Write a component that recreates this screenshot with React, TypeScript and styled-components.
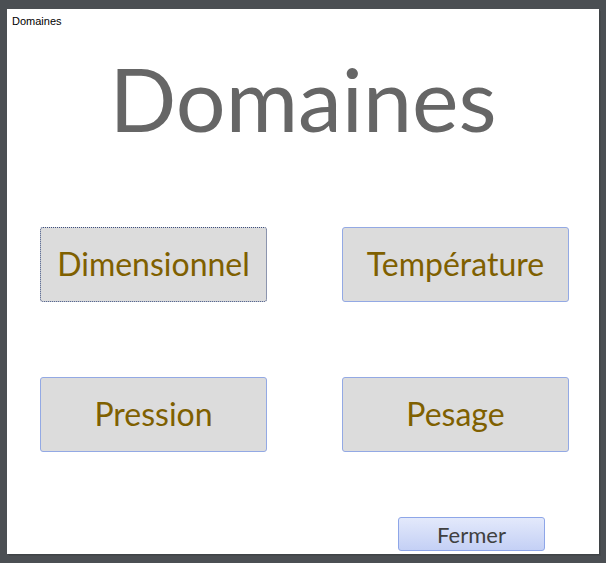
import React from 'react';
import styled, { createGlobalStyle } from 'styled-components';

const GlobalStyle = createGlobalStyle`
  html, body {
    margin: 0;
    padding: 0;
    background: #4b4f53;
  }
  body {
    width: 606px;
    height: 563px;
    overflow: hidden;
    font-family: 'Lato', 'Open Sans', sans-serif;
  }
`;

const Frame = styled.div`
  width: 606px;
  height: 563px;
  box-sizing: border-box;
  padding: 9px 7px 9px 7px;
  background: #4b4f53;
`;

const Window = styled.div`
  width: 592px;
  height: 545px;
  background: #ffffff;
  display: flex;
  flex-direction: column;
  box-shadow: 1px 1px 0 #3f4346, 2px 2px 0 #45494c;
`;

const TitleBar = styled.div`
  height: 22px;
  padding: 5px 0 0 5px;
  box-sizing: border-box;
  font-family: 'Liberation Sans', Arial, sans-serif;
  font-size: 11px;
  color: #000000;
  line-height: 14px;
`;

const Heading = styled.h1`
  margin: 17px 0 0 0;
  height: 100px;
  text-align: center;
  font-family: 'Lato', 'Open Sans', sans-serif;
  font-weight: 400;
  font-size: 88px;
  line-height: 100px;
  color: #666666;
`;

const ButtonGrid = styled.div`
  display: grid;
  grid-template-columns: 227px 227px;
  grid-auto-rows: 75px;
  column-gap: 75px;
  row-gap: 75px;
  margin-top: 79px;
  padding-left: 33px;
`;

const DomainButton = styled.button<{ $focused?: boolean }>`
  box-sizing: border-box;
  width: 227px;
  height: 75px;
  background: #dcdcdc;
  border: 1px ${(p) => (p.$focused ? 'dotted #3d4f80' : 'solid #93a9e4')};
  border-radius: 3px;
  font-family: 'Lato', 'Open Sans', sans-serif;
  font-size: 32px;
  color: #7f6000;
  padding: 0 0 3px 0;
  cursor: pointer;
`;

const Footer = styled.div`
  display: flex;
  margin-top: 65px;
  padding-left: 391px;
`;

const CloseButton = styled.button`
  box-sizing: border-box;
  width: 147px;
  height: 34px;
  border: 1px solid #8ea6e8;
  border-radius: 3px;
  background: linear-gradient(#e3e9fb, #c4d0f5);
  font-family: 'Lato', 'Open Sans', sans-serif;
  font-size: 22px;
  color: #404040;
  padding: 0;
  cursor: pointer;
`;

const domaines = ['Dimensionnel', 'Température', 'Pression', 'Pesage'];

const App: React.FC = () => {
  return (
    <>
      <GlobalStyle />
      <Frame>
        <Window>
          <TitleBar>Domaines</TitleBar>
          <Heading>Domaines</Heading>
          <ButtonGrid>
            {domaines.map((d, i) => (
              <DomainButton key={d} $focused={i === 0}>
                {d}
              </DomainButton>
            ))}
          </ButtonGrid>
          <Footer>
            <CloseButton>Fermer</CloseButton>
          </Footer>
        </Window>
      </Frame>
    </>
  );
};

export default App;
